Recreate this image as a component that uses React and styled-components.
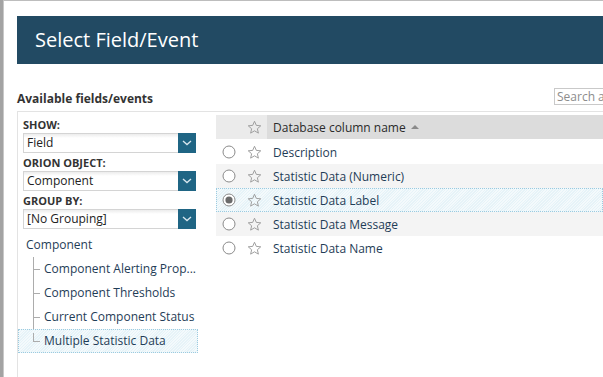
import React from "react";
import styled, { createGlobalStyle } from "styled-components";

const GlobalStyle = createGlobalStyle`
  html, body {
    margin: 0;
    padding: 0;
    background: #fff;
    overflow: hidden;
  }
  body {
    font-family: "Open Sans", "Liberation Sans", sans-serif;
    font-size: 12px;
    color: #204a63;
  }
`;

const hatch = `
  background-color: #e6f3f8;
  background-image: repeating-linear-gradient(
    135deg,
    rgba(255, 255, 255, 0.55) 0px,
    rgba(255, 255, 255, 0.55) 1px,
    transparent 1px,
    transparent 2px
  );
  outline: 1px dotted #9ccbe0;
  outline-offset: -1px;
`;

const Page = styled.div`
  display: flex;
  width: 603px;
  height: 377px;
  background: #a3a3a3;
`;

const Dialog = styled.div`
  flex: 1;
  min-width: 0;
  margin-left: 3px;
  border-left: 1px solid #c8c8c8;
  border-top: 1px solid #bdbdbd;
  background: #fff;
  padding: 15px 0 0 13px;
  display: flex;
  flex-direction: column;
  overflow: hidden;
`;

const Header = styled.div`
  height: 48px;
  background: #224a63;
  color: #fff;
  font-size: 20px;
  line-height: 48px;
  padding-left: 18px;
`;

const TitleRow = styled.div`
  display: flex;
  align-items: center;
  margin-top: 22px;
  height: 20px;
`;

const Caption = styled.div`
  flex: 1;
  font-weight: bold;
  font-size: 12px;
  color: #333;
  margin-top: 4px;
`;

const Search = styled.input`
  flex-shrink: 0;
  width: 60px;
  margin-right: -11px;
  height: 17px;
  box-sizing: border-box;
  border: 1px solid #c9c9c9;
  padding: 0 2px;
  font-family: inherit;
  font-size: 12px;
  color: #555;
  &::placeholder {
    color: #8c8c8c;
  }
`;

const Body = styled.div`
  flex: 1;
  display: flex;
  margin-top: 5px;
  border-top: 1px solid #e3e3e3;
  border-left: 1px solid #e3e3e3;
`;

const Side = styled.div`
  width: 198px;
  padding-top: 5px;
  flex-shrink: 0;
`;

const FieldLabel = styled.div`
  font-weight: bold;
  font-size: 11px;
  line-height: 16px;
  color: #333;
  padding-left: 5px;
`;

const SelectBox = styled.div`
  display: flex;
  margin: 0 0 2px 5px;
  width: 173px;
  height: 20px;
`;

const SelectValue = styled.div`
  flex: 1;
  box-sizing: border-box;
  border: 1px solid #d4d4d4;
  border-right: none;
  background: linear-gradient(#ececec 0, #fff 4px);
  color: #222;
  font-size: 12px;
  line-height: 18px;
  padding-left: 3px;
`;

const SelectButton = styled.div`
  width: 18px;
  background: #1f6584;
  display: flex;
  align-items: center;
  justify-content: center;
`;

const Tree = styled.div`
  margin-top: 4px;
  width: 180px;
`;

const TreeRoot = styled.div`
  height: 24px;
  line-height: 24px;
  padding-left: 8px;
  color: #1f3d57;
`;

const TreeItem = styled.div`
  position: relative;
  height: 24px;
  line-height: 24px;
  padding-left: 26px;
  color: #1f3d57;
  white-space: nowrap;
  ${(p) => (p.selected ? hatch : "")}

  &::before {
    content: "";
    position: absolute;
    left: 15px;
    top: ${(p) => (p.selected ? "4px" : "0")};
    height: ${(p) => (p.last ? "8px" : "24px")};
    border-left: 1px solid #acacac;
  }
  &::after {
    content: "";
    position: absolute;
    left: 15px;
    top: 12px;
    width: 7px;
    border-top: 1px solid #acacac;
  }
`;

const Main = styled.div`
  flex: 1;
  min-width: 0;
  padding-top: 3px;
  overflow: hidden;
`;

const Row = styled.div`
  display: flex;
  align-items: center;
  height: 24px;
  white-space: nowrap;
  background: ${(p) => (p.shade ? "#f4f4f4" : "#fff")};
  ${(p) => (p.selected ? hatch : "")}
`;

const HeadRow = styled(Row)`
  background: #ebebeb;
  color: #333;
  margin-bottom: 1px;
`;

const Cell = styled.div`
  width: ${(p) => p.w}px;
  height: 100%;
  flex-shrink: 0;
  display: flex;
  align-items: center;
  justify-content: center;
`;

const NameCell = styled.div`
  flex: 1;
  height: 100%;
  display: flex;
  align-items: center;
  padding-left: 6px;
  color: #1f3d57;
`;

const HeadName = styled(NameCell)`
  background: #dcdcdc;
  color: #2a2a2a;
`;

const SortArrow = styled.span`
  width: 0;
  height: 0;
  margin-left: 5px;
  border-left: 4px solid transparent;
  border-right: 4px solid transparent;
  border-bottom: 4px solid #8a8a8a;
`;

const Chevron = () => (
  <svg width="10" height="6" viewBox="0 0 10 6">
    <path d="M1 1 L5 4.6 L9 1" fill="none" stroke="#d8e6ee" strokeWidth="1.3" />
  </svg>
);

const Star = () => (
  <svg width="15" height="15" viewBox="0 0 24 24">
    <polygon
      points="12,2 14.9,8.6 22,9.3 16.6,14 18.2,21 12,17.3 5.8,21 7.4,14 2,9.3 9.1,8.6"
      fill="none"
      stroke="#9a9a9a"
      strokeWidth="1.5"
      strokeLinejoin="round"
    />
  </svg>
);

const Radio = ({ checked }) => (
  <svg width="14" height="14" viewBox="0 0 14 14">
    <circle cx="7" cy="7" r="6" fill="#fff" stroke="#8a8a8a" strokeWidth="1" />
    {checked && <circle cx="7" cy="7" r="3.6" fill="#6b6b6b" />}
  </svg>
);

const Select = ({ value }) => (
  <SelectBox>
    <SelectValue>{value}</SelectValue>
    <SelectButton>
      <Chevron />
    </SelectButton>
  </SelectBox>
);

const fields = [
  "Description",
  "Statistic Data (Numeric)",
  "Statistic Data Label",
  "Statistic Data Message",
  "Statistic Data Name",
];

const groups = [
  "Component Alerting Prop...",
  "Component Thresholds",
  "Current Component Status",
  "Multiple Statistic Data",
];

const App = () => {
  const selectedField = 2;
  const selectedGroup = 3;
  return (
    <>
      <GlobalStyle />
      <Page>
        <Dialog>
          <Header>Select Field/Event</Header>
          <TitleRow>
            <Caption>Available fields/events</Caption>
            <Search placeholder="Search all" />
          </TitleRow>
          <Body>
            <Side>
              <FieldLabel>SHOW:</FieldLabel>
              <Select value="Field" />
              <FieldLabel>ORION OBJECT:</FieldLabel>
              <Select value="Component" />
              <FieldLabel>GROUP BY:</FieldLabel>
              <Select value="[No Grouping]" />
              <Tree>
                <TreeRoot>Component</TreeRoot>
                {groups.map((g, i) => (
                  <TreeItem
                    key={g}
                    last={i === groups.length - 1}
                    selected={i === selectedGroup}
                  >
                    {g}
                  </TreeItem>
                ))}
              </Tree>
            </Side>
            <Main>
              <HeadRow>
                <Cell w={25} />
                <Cell w={26}>
                  <Star />
                </Cell>
                <HeadName>
                  Database column name
                  <SortArrow />
                </HeadName>
              </HeadRow>
              {fields.map((f, i) => (
                <Row key={f} shade={i % 2 === 1} selected={i === selectedField}>
                  <Cell w={25}>
                    <Radio checked={i === selectedField} />
                  </Cell>
                  <Cell w={26}>
                    <Star />
                  </Cell>
                  <NameCell>{f}</NameCell>
                </Row>
              ))}
            </Main>
          </Body>
        </Dialog>
      </Page>
    </>
  );
};

export default App;
